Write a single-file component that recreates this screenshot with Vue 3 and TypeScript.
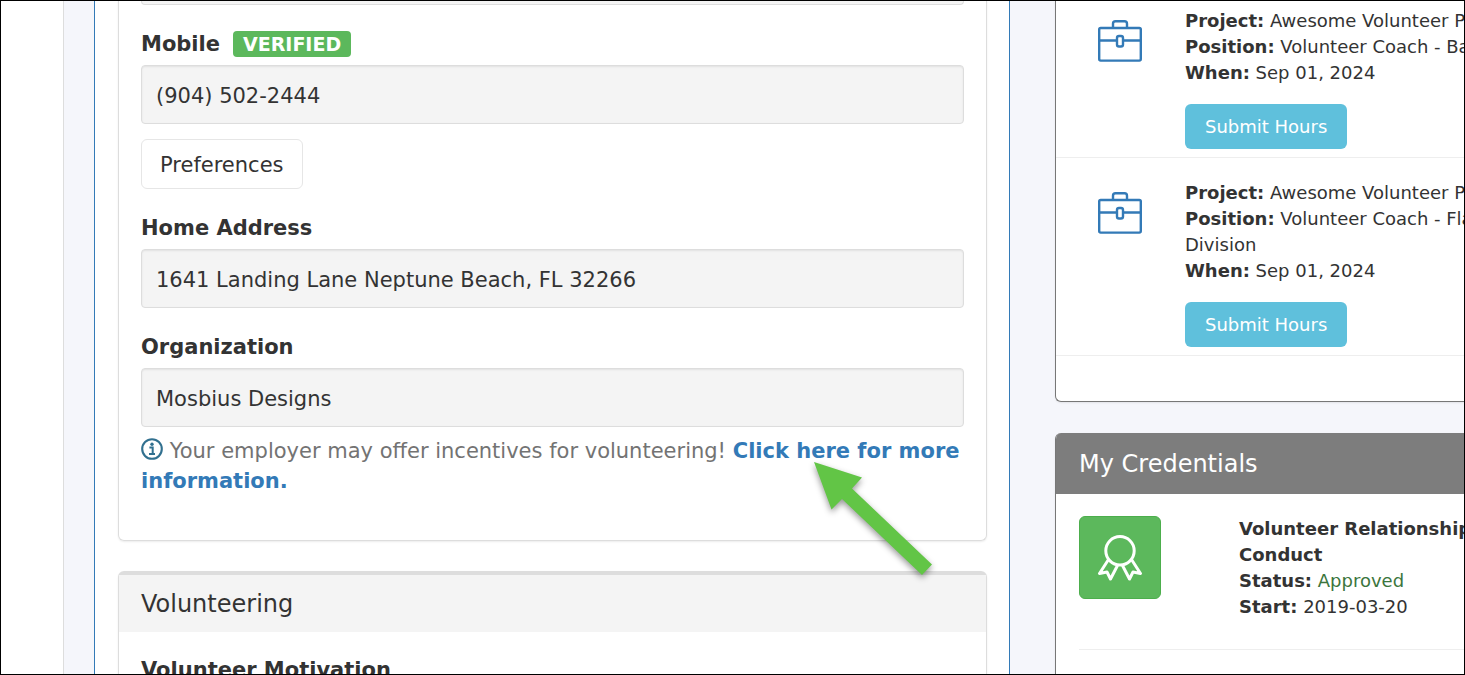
<script setup lang="ts">
interface Assignment {
  project: string
  position: string
  positionRest?: string
  when: string
}

const assignments: Assignment[] = [
  { project: 'Awesome Volunteer Project', position: 'Volunteer Coach - Basketball', when: 'Sep 01, 2024' },
  {
    project: 'Awesome Volunteer Project',
    position: 'Volunteer Coach - Flag Football',
    positionRest: 'Division',
    when: 'Sep 01, 2024',
  },
]
</script>

<template>
  <div class="screen">
    <aside class="rail"></aside>
    <main class="profile">
      <section class="card contact">
        <div class="field-end"></div>
        <div class="label-row">
          <label class="label" for="mobile">Mobile</label>
          <span class="badge">VERIFIED</span>
        </div>
        <input id="mobile" class="field" type="text" readonly value="(904) 502-2444" />
        <button class="preferences" type="button">Preferences</button>
        <div class="label-row"><label class="label" for="address">Home Address</label></div>
        <input id="address" class="field" type="text" readonly value="1641 Landing Lane Neptune Beach, FL 32266" />
        <div class="label-row"><label class="label" for="organization">Organization</label></div>
        <input id="organization" class="field" type="text" readonly value="Mosbius Designs" />
        <p class="help">
          <svg class="info" viewBox="0 0 22 22" aria-hidden="true">
            <circle cx="11" cy="11" r="9.8" fill="none" stroke="currentColor" stroke-width="2.1" />
            <circle cx="11" cy="6.2" r="1.7" fill="currentColor" />
            <path d="M8.4 9.4h3.300v6.400M8 15.900h6" fill="none" stroke="currentColor" stroke-width="2" />
          </svg>
          Your employer may offer incentives for volunteering!
          <a href="#incentives">Click here for more information.</a>
        </p>
      </section>
      <section class="card volunteering">
        <h2 class="card-title">Volunteering</h2>
        <h3 class="label motivation">Volunteer Motivation</h3>
      </section>
    </main>

    <div class="side">
      <section class="panel">
        <article v-for="(item, i) in assignments" :key="i" class="job">
          <svg class="briefcase" viewBox="0 0 44 42" aria-hidden="true">
            <g fill="none" stroke="currentColor" stroke-width="2.400">
              <rect x="1.2" y="8" width="41.600" height="32.600" rx="1.5" />
              <path d="M15 8V3.700Q15 1.200 17.500 1.200h9Q29 1.200 29 3.700V8" />
              <path d="M1 20.500h17.500M25.500 20.500H43" />
              <rect x="19" y="16" width="6" height="10.500" rx="2" />
            </g>
          </svg>
          <div class="details">
            <div><b>Project:</b> {{ item.project }}</div>
            <div><b>Position:</b> {{ item.position }}</div>
            <div v-if="item.positionRest">{{ item.positionRest }}</div>
            <div><b>When:</b> {{ item.when }}</div>
            <button class="submit" type="button">Submit Hours</button>
          </div>
        </article>
      </section>

      <section class="panel credentials">
        <h2 class="panel-title">My Credentials</h2>
        <article class="credential">
          <div class="tile">
            <svg class="ribbon" viewBox="0 0 46 46" aria-hidden="true">
              <g fill="none" stroke="currentColor" stroke-width="3" stroke-linejoin="round">
                <circle cx="23" cy="15.800" r="14.200" />
                <path d="M11.500 24.500L2.500 38.500L10 37L13.500 44L20.500 30.500" />
                <path d="M34.500 24.500L43.500 38.500L36 37L32.500 44L25.500 30.500" />
              </g>
            </svg>
          </div>
          <div class="details">
            <div><b>Volunteer Relationships Code of</b></div>
            <div><b>Conduct</b></div>
            <div><b>Status:</b> <span class="approved">Approved</span></div>
            <div><b>Start:</b> 2019-03-20</div>
          </div>
        </article>
      </section>
    </div>

    <svg class="arrow" viewBox="0 0 118 114" aria-hidden="true">
      <path d="M0 0L48 15.500L38 26.500L118 102.500L108 113L28 37L17.500 47.500Z" fill="#62c546" />
    </svg>
    <div class="frame"></div>
  </div>
</template>

<style>
body {
  margin: 0;
}
</style>

<style scoped>
.screen,
.screen * {
  box-sizing: border-box;
}
.screen {
  position: relative;
  display: grid;
  grid-template-columns: 64px minmax(0, 916fr) minmax(0, 485fr);
  height: 100vh;
  overflow: hidden;
  background: #f5f6fb;
  color: #333;
  font-family: Verdana, "DejaVu Sans", sans-serif;
  font-size: 21px;
  line-height: 30px;
}
.frame {
  position: absolute;
  inset: 0;
  border: 1px solid #000;
  pointer-events: none;
}
.rail {
  background: #fff;
  border-right: 1px solid #ddd;
}
.profile {
  margin-left: 30px;
  margin-right: -30px;
  padding: 0 22px 0 23px;
  background: #fff;
  border: solid #337ab7;
  border-width: 0 1px;
}
.card {
  border: 1px solid #ddd;
  border-radius: 6px;
  box-shadow: 0 1px 2px rgba(0, 0, 0, 0.08);
}
.contact {
  padding: 0 22px 44px;
  border-top: 0;
  border-radius: 0 0 6px 6px;
}
.field-end {
  height: 5px;
  background: #f4f4f4;
  border: 1px solid #ddd;
  border-top: 0;
  border-radius: 0 0 4px 4px;
}
.label-row {
  display: flex;
  align-items: center;
  gap: 13px;
  margin: 24px 0 6px;
}
.label {
  font-size: 21px;
  font-weight: bold;
}
.badge {
  padding: 0 10px;
  border-radius: 4px;
  background: #5cb85c;
  color: #fff;
  font-size: 19px;
  font-weight: bold;
  line-height: 26px;
}
.field {
  display: block;
  width: 100%;
  height: 59px;
  padding: 2px 14px 0;
  border: 1px solid #ddd;
  border-radius: 4px;
  background: #f4f4f4;
  box-shadow: inset 0 1px 2px rgba(0, 0, 0, 0.08);
  color: #333;
  font: inherit;
}
.preferences {
  display: block;
  height: 50px;
  margin-top: 15px;
  padding: 2px 18px 0;
  border: 1px solid #e6e6e6;
  border-radius: 6px;
  background: #fff;
  color: #333;
  font: inherit;
}
.help {
  margin: 9px 0 0;
  color: #737373;
}
.info {
  width: 22px;
  height: 22px;
  vertical-align: -2px;
  color: #31708f;
}
.help a {
  color: #337ab7;
  font-weight: bold;
  text-decoration: none;
}
.volunteering {
  margin-top: 30px;
  border-top: 4px solid #ddd;
}
.card-title {
  margin: 0;
  padding: 15px 22px 13px;
  background: #f4f4f4;
  font-size: 24px;
  font-weight: normal;
  line-height: 29px;
}
.motivation {
  margin: 23px 22px 0;
}
.side {
  margin-left: 75px;
  min-width: 0;
  font-size: 18px;
  line-height: 26px;
  white-space: nowrap;
}
.panel {
  overflow: hidden;
  background: #fff;
  border: 1px solid #777;
  border-width: 0 0 1px 1px;
  border-radius: 0 0 0 6px;
  padding-bottom: 45px;
  box-shadow: 0 1px 2px rgba(0, 0, 0, 0.08);
}
.job {
  display: grid;
  grid-template-columns: 129px minmax(0, 1fr);
  padding: 22px 0 8px;
  border-bottom: 1px solid #eee;
}
.job:first-child {
  padding-top: 8px;
}
.briefcase {
  width: 44px;
  height: 42px;
  margin: 12px 0 0 42px;
  color: #337ab7;
}
.submit {
  display: block;
  height: 45px;
  margin-top: 18px;
  padding: 0 20px;
  border: 0;
  border-radius: 6px;
  background: #5fc0dc;
  color: #fff;
  font: inherit;
}
.credentials {
  margin-top: 31px;
  min-height: 260px;
  border-radius: 6px 0 0 0;
}
.panel-title {
  margin: 0 0 0 -1px;
  padding: 17px 24px 15px;
  background: #7d7d7d;
  color: #fff;
  font-size: 24px;
  font-weight: normal;
  line-height: 29px;
}
.credential {
  display: grid;
  grid-template-columns: 82px minmax(0, 1fr);
  column-gap: 78px;
  margin-left: 23px;
  padding: 22px 0 29px;
  border-bottom: 1px solid #eee;
}
.tile {
  display: grid;
  place-items: center;
  height: 83px;
  border: 1px solid #4cae4c;
  border-radius: 6px;
  background: #5cb85c;
  color: #fff;
}
.ribbon {
  width: 46px;
  height: 46px;
}
.approved {
  color: #3c763d;
}
.arrow {
  position: absolute;
  left: 814px;
  top: 462px;
  width: 118px;
  height: 114px;
  overflow: visible;
  filter: drop-shadow(0 3px 3px rgba(0, 0, 0, 0.4));
}
</style>
